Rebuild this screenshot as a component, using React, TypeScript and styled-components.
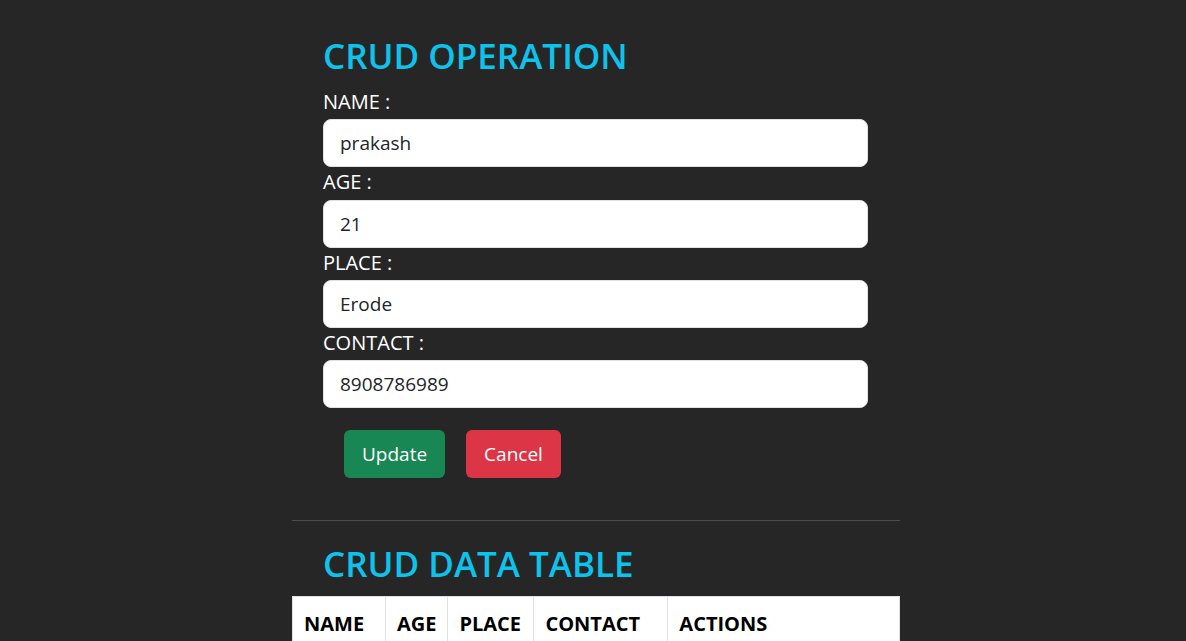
import React, { useState } from "react";
import styled, { createGlobalStyle } from "styled-components";

const GlobalStyle = createGlobalStyle`
  html, body {
    margin: 0;
    padding: 0;
    background: #262626;
  }
  body {
    font-family: "Open Sans", "Noto Sans", "Liberation Sans", sans-serif;
    color: #fff;
  }
  * { box-sizing: border-box; }
`;

const Page = styled.div`
  padding-left: 292px;
  padding-top: 32px;
`;

const Container = styled.div`
  width: 608px;
`;

const Section = styled.div`
  padding: 0 32px 0 31px;
`;

const Title = styled.h1<{ $mb?: number }>`
  margin: 0 0 ${(p) => p.$mb ?? 7}px;
  font-size: 35px;
  line-height: 48px;
  font-weight: 600;
  color: #0dc3ec;
`;

const Field = styled.div`
  display: flex;
  flex-direction: column;
`;

const Label = styled.label`
  font-size: 20px;
  line-height: 30px;
  height: 32.34px;
  color: #fff;
`;

const Input = styled.input`
  display: block;
  width: 100%;
  height: 48px;
  padding: 8px 16px;
  font-family: inherit;
  font-size: 19px;
  color: #212529;
  background: #fff;
  border: 1px solid #dee2e6;
  border-radius: 8px;
  outline: none;
`;

const Actions = styled.div`
  display: flex;
  gap: 21px;
  padding: 22px 0 0 21px;
`;

const Button = styled.button<{ $variant: "success" | "danger" }>`
  height: 48px;
  padding: 0 18px;
  font-family: inherit;
  font-size: 19px;
  color: #fff;
  border: none;
  border-radius: 6px;
  background: ${(p) => (p.$variant === "success" ? "#198754" : "#dc3545")};
  cursor: pointer;
`;

const Divider = styled.hr`
  margin: 42px 0 19px;
  border: none;
  border-top: 1px solid #4d4d4d;
`;

const Table = styled.table`
  width: 608px;
  border-collapse: collapse;
  background: #fff;
  color: #000;
  border: 1px solid #dee2e6;
`;

const Th = styled.th<{ $w: number }>`
  width: ${(p) => p.$w}px;
  padding: 14px 11px 8px;
  text-align: left;
  font-size: 20px;
  line-height: 26px;
  font-weight: 700;
  border: 1px solid #dee2e6;
`;

const Td = styled.td`
  padding: 10px 11px;
  font-size: 18px;
  border: 1px solid #dee2e6;
`;

const fields = [
  { key: "name", label: "NAME :", value: "prakash" },
  { key: "age", label: "AGE :", value: "21" },
  { key: "place", label: "PLACE :", value: "Erode" },
  { key: "contact", label: "CONTACT :", value: "8908786989" },
];

export default function App() {
  const [values, setValues] = useState<Record<string, string>>(
    Object.fromEntries(fields.map((f) => [f.key, f.value]))
  );
  return (
    <>
      <GlobalStyle />
      <Page>
        <Container>
          <Section>
            <Title>CRUD OPERATION</Title>
            {fields.map((f) => (
              <Field key={f.key}>
                <Label htmlFor={f.key}>{f.label}</Label>
                <Input
                  id={f.key}
                  value={values[f.key]}
                  onChange={(e) => setValues({ ...values, [f.key]: e.target.value })}
                />
              </Field>
            ))}
            <Actions>
              <Button $variant="success">Update</Button>
              <Button $variant="danger">Cancel</Button>
            </Actions>
          </Section>
          <Divider />
          <Section>
            <Title $mb={8}>CRUD DATA TABLE</Title>
          </Section>
          <Table>
            <thead>
              <tr>
                <Th $w={93}>NAME</Th>
                <Th $w={62}>AGE</Th>
                <Th $w={86}>PLACE</Th>
                <Th $w={134}>CONTACT</Th>
                <Th $w={233}>ACTIONS</Th>
              </tr>
            </thead>
            <tbody>
              <tr>
                <Td>prakash</Td>
                <Td>21</Td>
                <Td>Erode</Td>
                <Td>8908786989</Td>
                <Td>Edit Delete</Td>
              </tr>
            </tbody>
          </Table>
        </Container>
      </Page>
    </>
  );
}
